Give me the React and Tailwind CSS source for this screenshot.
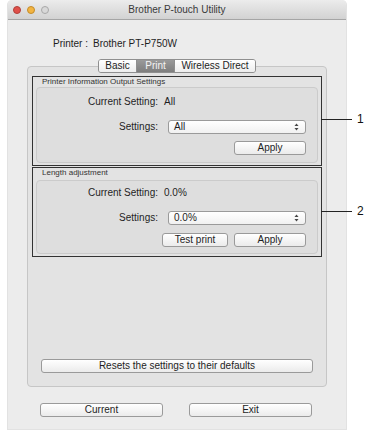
import React from 'react';

const font = { fontFamily: '"Liberation Sans", Arial, sans-serif' };

// Stepper arrows shown at the right of a popup menu
const Stepper = () => (
  <svg width="5" height="8" viewBox="0 0 5 8" className="shrink-0">
    <path d="M2.5 0.5 L4.5 3 L0.5 3 Z" fill="#444" />
    <path d="M0.5 5 L4.5 5 L2.5 7.5 Z" fill="#444" />
  </svg>
);

const Button = ({ children, className = '' }) => (
  <div
    className={`h-[14px] border border-[#9a9a9a] rounded-[3px] bg-gradient-to-b from-white to-[#ebebeb] flex items-center justify-center text-[10px] leading-[12px] text-[#1e1e1e] ${className}`}
  >
    {children}
  </div>
);

const Select = ({ value }) => (
  <div className="h-[14px] w-[138px] border border-[#9a9a9a] rounded-[3px] bg-gradient-to-b from-white to-[#f1f1f1] flex items-center justify-between pl-[5px] pr-[6px] text-[10px] leading-[12px] text-[#1e1e1e]">
    <span>{value}</span>
    <Stepper />
  </div>
);

// Section with the dark annotation frame and a callout number on the right
const Section = ({ title, current, value, number, lineTop, innerTop, labelH, rows, buttons }) => (
  <div className="relative h-[90px] mx-[4px] border border-[#333] flex flex-col pb-[2px]">
    <div className="pl-[9px] text-[8px] leading-[10px] text-[#333]" style={{ height: labelH }}>
      {title}
    </div>
    <div
      className="flex-1 mx-[3px] rounded-[4px] border border-[#cbcbcb] bg-[#dedede] flex flex-col"
      style={{ paddingTop: innerTop }}
    >
      <div className="flex items-center h-[12px] text-[10px] leading-[12px] text-[#1e1e1e]">
        <span className="w-[121px] text-right">Current Setting:</span>
        <span className="ml-[6px]">{current}</span>
      </div>
      <div className="flex items-center" style={{ marginTop: rows[0] }}>
        <span className="w-[121px] text-right text-[10px] leading-[12px] text-[#1e1e1e]">Settings:</span>
        <div className="ml-[10px]">
          <Select value={value} />
        </div>
      </div>
      <div className="flex justify-end gap-[6px] pr-[11px]" style={{ marginTop: rows[1] }}>
        {buttons}
      </div>
    </div>
    <div className="absolute left-full h-px w-[31px] bg-[#222]" style={{ top: lineTop }} />
    <div
      className="absolute text-[12px] leading-[12px] text-[#111]"
      style={{ top: lineTop - 6, left: 'calc(100% + 36px)' }}
    >
      {number}
    </div>
  </div>
);

export default function App() {
  return (
    <div className="w-[369px] h-[435px] bg-white overflow-hidden" style={font}>
      <div className="ml-[7px] w-[340px] h-[430px] bg-[#ececec] rounded-t-[5px] border-x border-b border-[#e2e2e2] flex flex-col">
        {/* Title bar */}
        <div className="h-[20px] shrink-0 relative flex items-center rounded-t-[5px] border-b border-[#a5a5a5] bg-gradient-to-b from-[#ececec] to-[#d2d2d2]">
          <div className="flex gap-[6px] pl-[5px]">
            <span className="w-[8px] h-[8px] rounded-full bg-[#e0504a] border border-[#b0403a]" />
            <span className="w-[8px] h-[8px] rounded-full bg-[#f2b441] border border-[#c48c2a]" />
            <span className="w-[8px] h-[8px] rounded-full bg-[#d8d8d8] border border-[#a8a8a8]" />
          </div>
          <div className="absolute inset-0 flex items-center justify-center text-[10px] text-[#3a3a3a]">
            Brother P-touch Utility
          </div>
        </div>

        {/* Printer */}
        <div className="mt-[18px] pl-[45px] h-[12px] text-[10px] leading-[12px] text-[#1e1e1e] flex">
          <span>Printer :</span>
          <span className="ml-[5px]">Brother PT-P750W</span>
        </div>

        {/* Tabs */}
        <div className="mt-[9px] ml-[19px] w-[300px] flex justify-center relative z-10">
          <div className="flex h-[14px] border border-[#8f8f8f] rounded-[3px] overflow-hidden text-[10px] leading-[12px]">
            <div className="w-[38px] flex items-center justify-center bg-gradient-to-b from-white to-[#ededed] text-[#1e1e1e] border-r border-[#8f8f8f]">Basic</div>
            <div className="w-[37px] flex items-center justify-center bg-gradient-to-b from-[#9a9a9a] to-[#7e7e7e] text-[#f4f4f4]">Print</div>
            <div className="w-[81px] flex items-center justify-center bg-gradient-to-b from-white to-[#ededed] text-[#1e1e1e] border-l border-[#8f8f8f]">Wireless Direct</div>
          </div>
        </div>

        {/* Tab content box */}
        <div className="-mt-[7px] ml-[19px] w-[300px] h-[321px] rounded-[4px] border border-[#c6c6c6] bg-[#e3e3e3] flex flex-col pt-[9px]">
          <Section
            title="Printer Information Output Settings"
            current="All"
            value="All"
            number="1"
            lineTop={42}
            labelH={10}
            innerTop={8}
            rows={[12, 7]}
            buttons={<Button className="w-[72px]">Apply</Button>}
          />
          <div className="mt-[1px]">
            <Section
              title="Length adjustment"
              current="0.0%"
              value="0.0%"
              number="2"
              lineTop={43}
              labelH={12}
              innerTop={6}
              rows={[12, 8]}
              buttons={
                <>
                  <Button className="w-[66px]">Test print</Button>
                  <Button className="w-[72px]">Apply</Button>
                </>
              }
            />
          </div>
          <div className="mt-auto mb-[13px] mx-[13px]">
            <Button className="w-full">Resets the settings to their defaults</Button>
          </div>
        </div>

        {/* Bottom buttons */}
        <div className="mt-[16px] ml-[32px] flex gap-[26px]">
          <Button className="w-[123px]">Current</Button>
          <Button className="w-[123px]">Exit</Button>
        </div>
      </div>
    </div>
  );
}
